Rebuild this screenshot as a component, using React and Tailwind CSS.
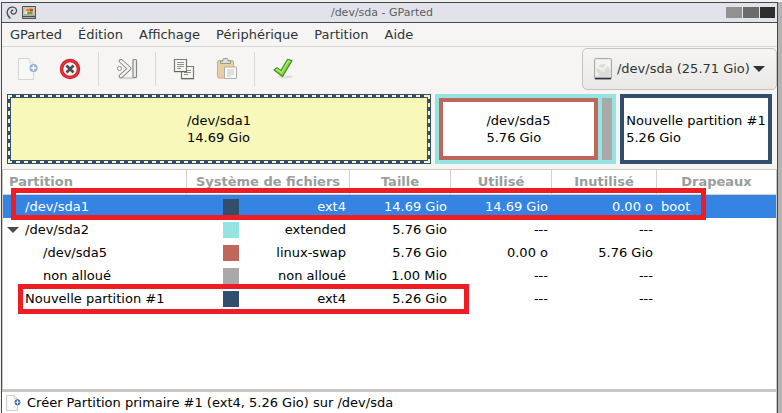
import React from "react";

const menus = ["GParted", "Édition", "Affichage", "Périphérique", "Partition", "Aide"];

const rows = [
  { name: "/dev/sda1", level: 0, swatch: "bg-[#314e6c]", fs: "ext4", size: "14.69 Gio", used: "14.69 Gio", unused: "0.00 o", flags: "boot", selected: true },
  { name: "/dev/sda2", level: 0, open: true, swatch: "bg-[#94e4e4]", fs: "extended", size: "5.76 Gio", used: "---", unused: "---", flags: "" },
  { name: "/dev/sda5", level: 1, swatch: "bg-[#c1665a]", fs: "linux-swap", size: "5.76 Gio", used: "0.00 o", unused: "5.76 Gio", flags: "" },
  { name: "non alloué", level: 1, swatch: "bg-[#a9a9a9]", fs: "non alloué", size: "1.00 Mio", used: "---", unused: "---", flags: "" },
  { name: "Nouvelle partition #1", level: 0, swatch: "bg-[#314e6c]", fs: "ext4", size: "5.26 Gio", used: "---", unused: "---", flags: "" },
];

const headers = ["Système de fichiers", "Taille", "Utilisé", "Inutilisé", "Drapeaux"];

function NewPageIcon({ className }) {
  return (
    <svg viewBox="0 0 20 22" className={className} aria-hidden="true">
      <path d="M.5.5h10.5l4.500 4.500v16.500H.5z" fill="#fbfbfa" stroke="#b4b9b0" />
      <path d="M11 .5c.6 1.700.3 3 0 4.500 1.500-.3 3-.3 4.500 0" fill="#f1f1ef" stroke="#c9ccc6" />
      <circle cx="15.500" cy="10" r="4" fill="#2f64a8" />
      <path d="M15.500 7.200v5.600M12.700 10h5.600" stroke="#fff" strokeWidth="1.600" />
    </svg>
  );
}

function StopIcon() {
  return (
    <svg viewBox="0 0 22 22" className="size-[22px]" aria-hidden="true">
      <circle cx="11" cy="11" r="8.500" fill="#f7f5f5" stroke="#c4141b" strokeWidth="3.400" />
      <circle cx="11" cy="11" r="8.500" fill="none" stroke="#ec3236" strokeWidth="1.800" />
      <path d="M7.500 7.500l7 7M14.500 7.500l-7 7" stroke="#4a4d4b" strokeWidth="2.700" />
    </svg>
  );
}

function ResizeIcon() {
  return (
    <svg viewBox="0 0 22 22" className="size-[22px]" aria-hidden="true">
      <ellipse cx="12" cy="20" rx="9" ry="1.300" fill="#d6d5d2" />
      <path d="M5 3L13.200 10.500 5 18.200" fill="none" stroke="#858884" strokeWidth="4.400" strokeLinecap="round" strokeLinejoin="round" />
      <path d="M5 3L13.200 10.500 5 18.200" fill="none" stroke="#f5f5f4" strokeWidth="2.400" strokeLinecap="round" strokeLinejoin="round" />
      <circle cx="3.500" cy="10.500" r="2" fill="#fafafa" stroke="#8d908c" />
      <rect x="17" y="1.500" width="3.500" height="18" rx="1" fill="#efefed" stroke="#858884" strokeWidth="1.200" />
    </svg>
  );
}

function CopyIcon() {
  return (
    <svg viewBox="0 0 22 22" className="size-[22px]" aria-hidden="true">
      <path d="M8.500 8.500h12v12h-12z" fill="#f5f5f3" stroke="#777975" strokeWidth="1.200" />
      <path d="M8 20.800h13" stroke="#5f615d" />
      <path d="M11 12.500h7M11 14.500h7M11 16.500h4" stroke="#8e908c" />
      <path d="M1.500 1.500h12v12h-12z" fill="#f8f8f7" stroke="#777975" strokeWidth="1.200" />
      <path d="M1 13.700h13" stroke="#5f615d" />
      <path d="M4 4.500h7M4 6.500h7M4 8.500h7M4 10.500h4" stroke="#8e908c" />
    </svg>
  );
}

function PasteIcon() {
  return (
    <svg viewBox="0 0 22 22" className="size-[22px]" aria-hidden="true">
      <rect x="2.500" y="2.500" width="16" height="17.500" rx="1.500" fill="#e9cfa5" stroke="#cdad7b" />
      <path d="M5.500 5.500v-2.500h2.500v-1.500q0-1 1-1h3q1 0 1 1v1.500h2.500v2.500z" fill="#dededd" stroke="#989a97" />
      <path d="M9.500 9h12v11.500h-12z" fill="#fafaf9" stroke="#adafac" />
      <path d="M12 12h7M12 14h7M12 16h7M12 18h4" stroke="#c6c7c4" />
    </svg>
  );
}

function ApplyIcon() {
  return (
    <svg viewBox="0 0 22 22" className="size-[22px]" aria-hidden="true">
      <ellipse cx="13" cy="18.800" rx="8" ry="1.600" fill="#dfdedc" />
      <path d="M2 12l3-2.300 4 3L15.500 1.500l4.500 1.200-9.500 15.800z" fill="#7ed63f" stroke="#4c961f" strokeLinejoin="round" strokeWidth="1.300" />
      <path d="M4 12l1.200-.8 4.300 3.500L16.300 3l2 .5" fill="none" stroke="#b5f08a" strokeWidth="1.200" />
    </svg>
  );
}

function DiskIcon() {
  return (
    <svg viewBox="0 0 18 22" className="h-[22px] w-[18px]" aria-hidden="true">
      <rect x=".5" y=".5" width="17" height="20.500" rx="1" fill="#dededc" stroke="#a8a9a6" />
      <path d="M1.500 1.500h15v10l-15 7z" fill="#f3f3f2" />
      <ellipse cx="9" cy="12" rx="6.500" ry="6" fill="#dcdcd7" />
      <path d="M3.500 9l5.500 3 4-5" fill="none" stroke="#f5f5f3" strokeWidth="2" />
      <circle cx="9" cy="12" r="1.800" fill="#eeeeec" />
      <path d="M1 20.500h16" stroke="#2c3340" strokeWidth="1.600" />
    </svg>
  );
}

function SwirlIcon() {
  return (
    <svg viewBox="0 0 12 14" className="h-[14px] w-3" fill="none" aria-hidden="true">
      <path d="M4.500 12.500C2 10.500.8 7.500 1.400 5 2.200 2.300 4.500.9 7 1.100c2.300.2 3.700 1.900 3.500 3.900-.2 2-1.800 3.300-3.500 3-1.500-.2-2.200-1.400-1.700-2.700.3-.8 1-1.200 1.900-1" stroke="#4c5054" strokeWidth="1.300" />
    </svg>
  );
}

function AppIcon() {
  return (
    <svg viewBox="0 0 14 13" className="h-[13px] w-[14px]" aria-hidden="true">
      <rect x=".5" y=".5" width="13" height="12" fill="#ded9c9" stroke="#55574f" />
      <rect x="2" y="2" width="10" height="6.500" fill="#eee9df" stroke="#8a8577" strokeWidth=".6" />
      <path d="M3 4l3-1.500 2 2-2 1.500z" fill="#e87834" />
      <path d="M7 2.500l4 .5v2.500l-3-.5z" fill="#cf4334" />
      <path d="M5 6.500l4-1.500 2 1.500-1 1.500H5z" fill="#5fa83a" />
      <path d="M1 10.500h12" stroke="#494b45" strokeWidth="1.600" />
    </svg>
  );
}

function ToolButton({ label, disabled, children }) {
  return (
    <button type="button" aria-label={label} disabled={disabled} className="flex h-[42px] w-[42px] items-center justify-center disabled:opacity-50">
      {children}
    </button>
  );
}

function ToolSeparator() {
  return <div className="mx-[7px] h-[34px] w-px bg-[#dad8d5]" />;
}

function PartitionText({ name, size }) {
  return (
    <div className="leading-[17px] whitespace-nowrap">
      <div>{name}</div>
      <div>{size}</div>
    </div>
  );
}

function DashedFrame() {
  return (
    <svg className="absolute inset-0 size-full" stroke="#f8f8ba" strokeWidth="2" strokeDasharray="4 4" aria-hidden="true">
      <line x1="1" y1="2" x2="99.700%" y2="2" />
      <line x1="1" y1="68" x2="99.700%" y2="68" />
      <line x1="2" y1="1" x2="2" y2="69" />
      <svg x="100%" overflow="visible">
        <line x1="-2" y1="1" x2="-2" y2="69" />
      </svg>
    </svg>
  );
}

function DiskMap() {
  return (
    <div className="grid h-[70px] grid-cols-[424fr_181fr_152fr] gap-1 text-black">
      <div className="relative min-w-0 bg-[#314e6c] p-1">
        <DashedFrame />
        <div className="flex h-full items-center justify-center bg-[#f8f8ba]">
          <PartitionText name="/dev/sda1" size="14.69 Gio" />
        </div>
      </div>
      <div className="flex min-w-0 gap-1 bg-[#94e4e4] p-1">
        <div className="flex grow items-center justify-center border-4 border-[#c1665a] bg-white">
          <PartitionText name="/dev/sda5" size="5.76 Gio" />
        </div>
        <div className="w-[10px] bg-[#a9a9a9]" />
      </div>
      <div className="flex min-w-0 items-center justify-center border-4 border-[#314e6c] bg-white">
        <PartitionText name="Nouvelle partition #1" size="5.26 Gio" />
      </div>
    </div>
  );
}

function PartitionTable() {
  return (
    <div className="relative grow border-x border-t border-[#cdc9c4] bg-white">
      <table className="w-full table-fixed border-separate border-spacing-0 text-black">
        <colgroup>
          <col className="w-[184px]" />
          <col className="w-[163px]" />
          <col className="w-[101px]" />
          <col className="w-[101px]" />
          <col className="w-[105px]" />
          <col />
        </colgroup>
        <thead>
          <tr className="h-[25px] text-[#999d9b]">
            <th className="border-r border-b border-[#d5d0cc] px-1.5 py-0 text-left leading-5">Partition</th>
            {headers.map((h) => (
              <th key={h} className="border-r border-b border-[#d5d0cc] p-0 text-center leading-5 whitespace-nowrap last:border-r-0">{h}</th>
            ))}
          </tr>
        </thead>
        <tbody>
          {rows.map((r) => (
            <tr key={r.name} className={r.selected ? "h-[23px] bg-[#3584e4] text-white" : "h-[23px]"}>
              <td className="p-0">
                <div className={r.level ? "flex items-center pl-[22px]" : "flex items-center pl-1"}>
                  <span className="flex w-[18px] items-center">
                    {r.open && (
                      <button type="button" aria-label="Replier /dev/sda2">
                        <svg viewBox="0 0 12 6" className="h-1.5 w-3" aria-hidden="true"><path d="M0 0h12L6 6z" fill="#4a4a4a" /></svg>
                      </button>
                    )}
                  </span>
                  <span className="whitespace-nowrap">{r.name}</span>
                </div>
              </td>
              <td className="p-0">
                <div className="flex items-center justify-between pr-1 pl-9">
                  <span className={`size-4 ${r.swatch}`} />
                  <span>{r.fs}</span>
                </div>
              </td>
              <td className="py-0 pr-1 pl-0 text-right">{r.size}</td>
              <td className="py-0 pr-1 pl-0 text-right">{r.used}</td>
              <td className="py-0 pr-1 pl-0 text-right">{r.unused}</td>
              <td className="py-0 pr-0 pl-1">{r.flags}</td>
            </tr>
          ))}
        </tbody>
      </table>
      <div className="pointer-events-none absolute top-[18px] left-2 h-8 w-[695px] border-[5px] border-[#ee1c24]" />
      <div className="pointer-events-none absolute top-[114px] left-[15px] h-[30px] w-[451px] border-[5px] border-[#ee1c24]" />
    </div>
  );
}

export default function App() {
  return (
    <div className="flex min-h-screen flex-col bg-[#f0f0f0] pt-0.5 pl-px font-['DejaVu_Sans',sans-serif] text-[13px] text-[#2e3436]">
      <div className="flex grow bg-[#b3b3b3] pr-1">
        <div className="flex min-w-0 grow flex-col border-x border-t border-[#48494b] bg-[#f6f5f3]">
          <header className="flex h-5 items-center justify-between border-b border-[#48494b] bg-[#e2e3ea] pr-0.5 pl-1">
            <div className="flex w-8 items-center gap-1">
              <SwirlIcon />
              <AppIcon />
            </div>
            <h1 className="text-[11px] leading-4 text-[#5a5c62]">/dev/sda - GParted</h1>
            <div className="flex gap-px">
              <button type="button" aria-label="Réduire" className="h-[11px] w-4 bg-[#919191]" />
              <button type="button" aria-label="Agrandir" className="h-[11px] w-4 bg-[#6b6b6b]" />
              <button type="button" aria-label="Fermer" className="h-[11px] w-[15px] bg-[#2e2e2e]" />
            </div>
          </header>

          <nav className="flex h-6 items-center border-b border-[#d9d7d4]">
            {menus.map((m) => (
              <button key={m} type="button" className="px-2 leading-5">{m}</button>
            ))}
          </nav>

          <div className="flex h-[43px] items-center justify-between pl-[5px]">
            <div className="flex items-center">
              <ToolButton label="Nouvelle partition" disabled><NewPageIcon className="h-[22px] w-5" /></ToolButton>
              <ToolButton label="Supprimer"><StopIcon /></ToolButton>
              <ToolSeparator />
              <ToolButton label="Redimensionner"><ResizeIcon /></ToolButton>
              <ToolSeparator />
              <ToolButton label="Copier"><CopyIcon /></ToolButton>
              <ToolButton label="Coller"><PasteIcon /></ToolButton>
              <ToolSeparator />
              <ToolButton label="Appliquer"><ApplyIcon /></ToolButton>
            </div>
            <div className="relative">
              <select aria-label="Périphérique" className="h-[42px] w-[195px] appearance-none rounded-[5px] border border-[#c6c1bc] bg-linear-to-b from-[#f6f5f3] to-[#eae8e6] pr-5 pl-[34px]">
                <option>/dev/sda (25.71 Gio)</option>
              </select>
              <span className="pointer-events-none absolute top-[10px] left-3"><DiskIcon /></span>
              <svg viewBox="0 0 12 6" className="pointer-events-none absolute top-[18px] right-3 h-1.5 w-3" aria-hidden="true"><path d="M0 0h12L6 6z" fill="#2e3436" /></svg>
            </div>
          </div>

          <div className="px-[5px] pt-1 pb-[5px]">
            <DiskMap />
          </div>

          <PartitionTable />

          <footer className="flex h-6 items-center gap-1.5 border-t-[3px] border-r border-[#cac6c1] bg-white pl-1 text-black">
            <NewPageIcon className="h-4 w-[15px]" />
            <span className="leading-5">Créer Partition primaire #1 (ext4, 5.26 Gio) sur /dev/sda</span>
          </footer>
        </div>
      </div>
    </div>
  );
}
